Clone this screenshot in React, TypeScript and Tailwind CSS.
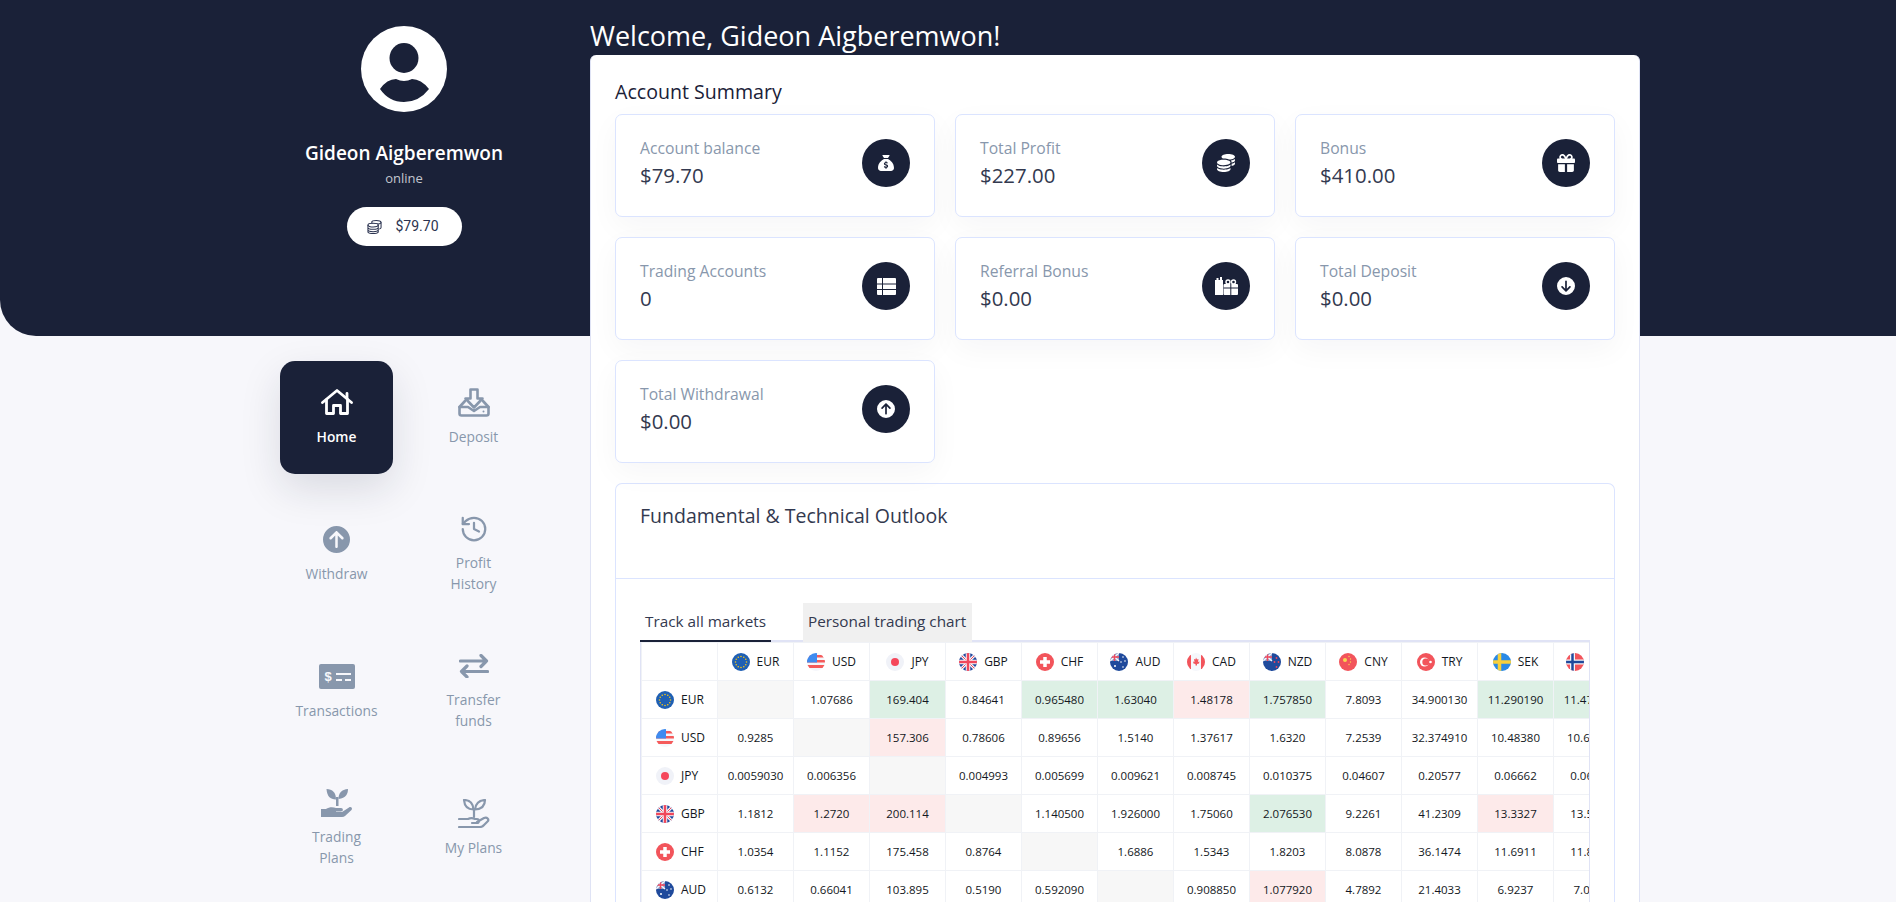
import React from "react";
import { History } from "lucide-react";
import {
  FaCircleArrowDown,
  FaCircleArrowUp,
  FaCoins,
  FaGift,
  FaSackDollar,
} from "react-icons/fa6";

const sans = "font-['Open_Sans','Noto_Sans',sans-serif]";

const HomeIcon = () => (
  <svg viewBox="0 0 32 26" className="h-[26px] w-[32px]" fill="none" stroke="currentColor" strokeWidth="2.800" strokeLinejoin="round" strokeLinecap="round">
    <path d="M1.500 13.500 16 1.500 30.500 13.500" />
    <path d="M26 9.500V4.500" />
    <path d="M5.500 11v13.500h7V16.500h7v8h7V11" />
  </svg>
);

const DepositIcon = () => (
  <svg viewBox="0 0 32 29" className="h-[29px] w-[32px]" fill="none" stroke="currentColor" strokeWidth="2.600" strokeLinejoin="round" strokeLinecap="round">
    <path d="M12.500 1.500h7v9h5L16 19.500 7.500 10.500h5z" />
    <path d="M7 13 1.500 19v6.500a2 2 0 0 0 2 2h25a2 2 0 0 0 2-2V19L25 13" />
    <path d="M1.500 19h8.500l6 4 6-4h8.500" />
    <circle cx="25.500" cy="23.500" r="1" fill="currentColor" stroke="none" />
  </svg>
);

const TransactionsIcon = () => (
  <svg viewBox="0 0 36 25" className="h-[25px] w-[36px]">
    <rect width="36" height="25" rx="2" fill="currentColor" />
    <text x="5.500" y="17" fontSize="13" fontWeight="700" fill="#f7f7fb" fontFamily="Liberation Sans, sans-serif">$</text>
    <path d="M17 10h15M17 16h6M26 16h6" stroke="#f7f7fb" strokeWidth="2" />
  </svg>
);

const TransferIcon = () => (
  <svg viewBox="0 0 30 24" className="h-[24px] w-[30px]" fill="none" stroke="currentColor" strokeWidth="3.200" strokeLinecap="round" strokeLinejoin="round">
    <path d="M1.500 7h26M22 1.500 27.500 7 22 12.500" />
    <path d="M28.500 17.500h-26M8 12 2.500 17.500 8 23" />
  </svg>
);

const TradingPlansIcon = () => (
  <svg viewBox="0 0 32 29" className="h-[29px] w-[32px]" fill="currentColor">
    <path d="M5.500 1c6 0 9.500 3.500 9.500 10.500C9 11.500 6 8 5.500 1z" />
    <path d="M27 1c0 5-2 9-9.500 10 0-6 3-9.500 9.500-10z" />
    <rect x="15" y="9" width="2.500" height="9" />
    <path d="M0 21h5c3-2 7-2 10-1h5c2.500 0 2.500 3.500 0 3.500h-5v.5h6l7-4.500c2-1.300 4 1 2.500 2.500L24 28q-1 1-3 1H0z" />
  </svg>
);

const MyPlansIcon = () => (
  <svg viewBox="0 0 32 29" className="h-[29px] w-[32px]" fill="none" stroke="currentColor" strokeWidth="2.200" strokeLinecap="round" strokeLinejoin="round">
    <path d="M6 1c6 0 9 3.500 9.500 9.500C9.500 10.500 6.500 7 6 1z" />
    <path d="M27 1c0 5-3 9-10 9.500C17.500 5 20.500 1.500 27 1z" />
    <path d="M16 10v8" />
    <path d="M1 20h9c2-1 5-1 7 0h2c2.500 0 2.500 4 0 4h-5" />
    <path d="M19 23l7-4c3-1.500 5.500 1.500 3.500 3.500L26 26q-1.500 2-4 2H1" />
  </svg>
);

const TableIcon = () => (
  <svg viewBox="0 0 19 17" className="h-[17px] w-[19px]">
    <rect width="19" height="17" rx="1" fill="#fff" />
    <path d="M5.500 0v17M0 6h19M0 11.500h19" stroke="#1a2138" strokeWidth="1" />
  </svg>
);

const GiftsIcon = () => (
  <svg viewBox="0 0 23 18" className="h-[18px] w-[23px]" fill="#fff">
    <path d="M0 3h1.500V1h2v2H5V0h2v3h1v15H0z" />
    <rect x="8.500" y="7" width="14.500" height="11" rx="1" />
    <circle cx="13" cy="5" r="2" fill="none" stroke="#fff" strokeWidth="1.400" />
    <circle cx="18.500" cy="5" r="2" fill="none" stroke="#fff" strokeWidth="1.400" />
    <path d="M15.800 7v11M8.500 11h14.500" stroke="#1a2138" strokeWidth="1" />
  </svg>
);

const navItems: { label: string[]; icon: React.ReactNode; active?: boolean }[] = [
  { label: ["Home"], icon: <HomeIcon />, active: true },
  { label: ["Deposit"], icon: <DepositIcon /> },
  { label: ["Withdraw"], icon: <FaCircleArrowUp className="h-[27px] w-[27px]" /> },
  { label: ["Profit", "History"], icon: <History className="h-[30px] w-[30px]" strokeWidth={1.800} /> },
  { label: ["Transactions"], icon: <TransactionsIcon /> },
  { label: ["Transfer", "funds"], icon: <TransferIcon /> },
  { label: ["Trading", "Plans"], icon: <TradingPlansIcon /> },
  { label: ["My Plans"], icon: <MyPlansIcon /> },
];

const stats = [
  { label: "Account balance", value: "$79.70", icon: <FaSackDollar className="h-[16px] w-[16px]" /> },
  { label: "Total Profit", value: "$227.00", icon: <FaCoins className="h-[18px] w-[18px]" /> },
  { label: "Bonus", value: "$410.00", icon: <FaGift className="h-[18px] w-[18px]" /> },
  { label: "Trading Accounts", value: "0", icon: <TableIcon /> },
  { label: "Referral Bonus", value: "$0.00", icon: <GiftsIcon /> },
  { label: "Total Deposit", value: "$0.00", icon: <FaCircleArrowDown className="h-[18px] w-[18px]" /> },
  { label: "Total Withdrawal", value: "$0.00", icon: <FaCircleArrowUp className="h-[18px] w-[18px]" /> },
];

const Flag = ({ code }: { code: string }) => {
  const inner: Record<string, React.ReactNode> = {
    EUR: (
      <>
        <rect width="18" height="18" fill="#1e5fb4" />
        {[0, 30, 60, 90, 120, 150, 180, 210, 240, 270, 300, 330].map((a) => (
          <circle key={a} cx={9 + 5.500 * Math.cos((a * Math.PI) / 180)} cy={9 + 5.500 * Math.sin((a * Math.PI) / 180)} r="0.800" fill="#f5c518" />
        ))}
      </>
    ),
    USD: (
      <>
        <rect width="18" height="18" fill="#f5f7fb" />
        <rect y="2" width="18" height="2.500" fill="#f55b5b" />
        <rect y="7" width="18" height="2.500" fill="#f55b5b" />
        <rect y="12" width="18" height="3" fill="#f55b5b" />
        <rect width="10" height="9.500" fill="#3e8bf0" />
      </>
    ),
    JPY: (
      <>
        <rect width="18" height="18" fill="#f0f2f8" />
        <circle cx="9" cy="9" r="4" fill="#f5475b" />
      </>
    ),
    GBP: (
      <>
        <rect width="18" height="18" fill="#24489c" />
        <path d="M0 0 18 18M18 0 0 18" stroke="#f5f7fb" strokeWidth="3" />
        <path d="M0 0 18 18M18 0 0 18" stroke="#f0475b" strokeWidth="1" />
        <path d="M9 0v18M0 9h18" stroke="#f5f7fb" strokeWidth="4.500" />
        <path d="M9 0v18M0 9h18" stroke="#f0475b" strokeWidth="2.500" />
      </>
    ),
    CHF: (
      <>
        <rect width="18" height="18" fill="#f2545b" />
        <path d="M9 4v10M4 9h10" stroke="#fff" strokeWidth="3.500" />
      </>
    ),
    AUD: (
      <>
        <rect width="18" height="18" fill="#1f4a9c" />
        <rect width="9" height="8" fill="#f5f7fb" opacity="0.500" />
        <path d="M0 0 9 8M9 0 0 8" stroke="#f5f7fb" strokeWidth="1.400" />
        <path d="M4.500 0v8M0 4h9" stroke="#f0475b" strokeWidth="1.400" />
        <circle cx="5" cy="13" r="1" fill="#fff" />
        <circle cx="13" cy="4" r="0.800" fill="#fff" />
        <circle cx="15" cy="8" r="0.800" fill="#fff" />
        <circle cx="11" cy="9" r="0.800" fill="#fff" />
        <circle cx="13" cy="14" r="0.800" fill="#fff" />
      </>
    ),
    CAD: (
      <>
        <rect width="18" height="18" fill="#f5f7fb" />
        <rect width="4" height="18" fill="#f2545b" />
        <rect x="14" width="4" height="18" fill="#f2545b" />
        <path d="M9 4.500 10 6.500l1.500-.5-.5 3 1.500-.5-.5 2-2 .5v1.500H8.500V11l-2-.5-.5-2 1.500.5-.5-3 1.500.5z" fill="#f2545b" />
      </>
    ),
    NZD: (
      <>
        <rect width="18" height="18" fill="#1f4a9c" />
        <rect width="9" height="8" fill="#f5f7fb" opacity="0.500" />
        <path d="M0 0 9 8M9 0 0 8" stroke="#f5f7fb" strokeWidth="1.400" />
        <path d="M4.500 0v8M0 4h9" stroke="#f0475b" strokeWidth="1.400" />
        <circle cx="13.500" cy="5" r="0.900" fill="#f0475b" />
        <circle cx="15.500" cy="9" r="0.900" fill="#f0475b" />
        <circle cx="11.500" cy="9" r="0.900" fill="#f0475b" />
        <circle cx="13.500" cy="14" r="0.900" fill="#f0475b" />
      </>
    ),
    CNY: (
      <>
        <rect width="18" height="18" fill="#f2545b" />
        <circle cx="6" cy="7" r="2" fill="#f8d64e" />
        <circle cx="10" cy="3.500" r="0.700" fill="#f8d64e" />
        <circle cx="11.500" cy="6" r="0.700" fill="#f8d64e" />
        <circle cx="11.500" cy="9" r="0.700" fill="#f8d64e" />
        <circle cx="10" cy="11.500" r="0.700" fill="#f8d64e" />
      </>
    ),
    TRY: (
      <>
        <rect width="18" height="18" fill="#f2545b" />
        <circle cx="7.500" cy="9" r="4.500" fill="#fff" />
        <circle cx="8.800" cy="9" r="3.500" fill="#f2545b" />
        <circle cx="13.500" cy="9" r="1.300" fill="#fff" />
      </>
    ),
    SEK: (
      <>
        <rect width="18" height="18" fill="#2a8ae6" />
        <path d="M6.500 0v18M0 9h18" stroke="#f8d03c" strokeWidth="3.500" />
      </>
    ),
    NOK: (
      <>
        <rect width="18" height="18" fill="#f2545b" />
        <path d="M6.500 0v18M0 9h18" stroke="#f5f7fb" strokeWidth="5" />
        <path d="M6.500 0v18M0 9h18" stroke="#1f4a9c" strokeWidth="2.500" />
      </>
    ),
  };
  return (
    <svg viewBox="0 0 18 18" className="h-[18px] w-[18px] shrink-0 rounded-full">
      {inner[code]}
    </svg>
  );
};

const currencies = ["EUR", "USD", "JPY", "GBP", "CHF", "AUD", "CAD", "NZD", "CNY", "TRY", "SEK", "NOK"];

// g: / r: prefixes mark the green and red heat cells, an empty string is the grey diagonal
const rows: Record<string, string[]> = {
  EUR: ["", "1.07686", "g:169.404", "0.84641", "g:0.965480", "g:1.63040", "r:1.48178", "g:1.757850", "7.8093", "34.900130", "g:11.290190", "g:11.474100"],
  USD: ["0.9285", "", "r:157.306", "0.78606", "0.89656", "1.5140", "1.37617", "1.6320", "7.2539", "32.374910", "10.48380", "10.65010"],
  JPY: ["0.0059030", "0.006356", "", "0.004993", "0.005699", "0.009621", "0.008745", "0.010375", "0.04607", "0.20577", "0.06662", "0.06773"],
  GBP: ["1.1812", "r:1.2720", "r:200.114", "", "1.140500", "1.926000", "1.75060", "g:2.076530", "9.2261", "41.2309", "r:13.3327", "13.5514"],
  CHF: ["1.0354", "1.1152", "175.458", "0.8764", "", "1.6886", "1.5343", "1.8203", "8.0878", "36.1474", "11.6911", "11.8825"],
  AUD: ["0.6132", "0.66041", "103.895", "0.5190", "0.592090", "", "0.908850", "r:1.077920", "4.7892", "21.4033", "6.9237", "7.0369"],
};

const Cell = ({ raw }: { raw: string }) => {
  const value = raw.replace(/^[gr]:/, "");
  let bg = "bg-white";
  if (raw === "") bg = "bg-[#f7f7f7]";
  else if (raw.startsWith("g:")) bg = "bg-[#ddf0e5]";
  else if (raw.startsWith("r:")) bg = "bg-[#fdeaea]";
  return <td className={`h-[38px] border border-[#f0f2f6] p-0 text-center ${bg}`}>{value}</td>;
};

export default function App() {
  return (
    <div className={`relative h-screen overflow-hidden bg-[#f7f7fb] ${sans}`}>
      <div className="absolute inset-x-0 top-0 h-[336px] rounded-bl-[36px] bg-[#1a2138]" />

      <div className="relative flex gap-[60px] pl-[280px]">
        <aside className="w-[250px] shrink-0">
          <div className="flex h-[361px] flex-col items-center pt-[26px] pr-[2px]">
            <svg viewBox="0 0 86 86" className="h-[86px] w-[86px]">
              <circle cx="43" cy="43" r="43" fill="#fff" />
              <ellipse cx="43" cy="32" rx="14.500" ry="15" fill="#1a2138" />
              <path d="M19 63Q26 53 35 53 43 57 51 53 60 53 68 63 58 76 43 76 28 76 19 63Z" fill="#1a2138" />
            </svg>
            <div className="mt-[29px] text-[19px] leading-[24px] font-semibold text-white">Gideon Aigberemwon</div>
            <div className="mt-[3px] text-[13px] leading-[20px] text-[#c3c6cf]">online</div>
            <div className="mt-[19px] flex h-[39px] w-[115px] items-center gap-[14px] rounded-full bg-white pl-[20px] font-['Roboto',sans-serif] text-[14px] text-[#2b3350]">
              <svg viewBox="0 0 16 16" className="h-[15px] w-[15px]" fill="none" stroke="currentColor" strokeWidth="1.100">
                <ellipse cx="10" cy="3.500" rx="5" ry="2" />
                <path d="M15 3.500v5.500c0 1-1 1.500-2 1.800" />
                <ellipse cx="6.500" cy="6.500" rx="5.500" ry="2" fill="#fff" />
                <path d="M1 6.500v7c0 1 2.500 2 5.500 2s5.500-1 5.500-2v-7M1 9c0 1 2.500 2 5.500 2S12 10 12 9M1 11.500c0 1 2.500 2 5.500 2s5.500-1 5.500-2" />
              </svg>
              $79.70
            </div>
          </div>

          <nav className="grid grid-cols-[113px_113px] gap-6">
            {navItems.map((item) => (
              <div
                key={item.label[0]}
                className={`flex h-[113px] flex-col items-center justify-center rounded-[15px] text-center text-[13.800px] leading-[21px] ${
                  item.active
                    ? "bg-[#1a2138] font-semibold text-white shadow-[0_15px_40px_rgba(26,33,56,0.13)]"
                    : "text-[#8897ac]"
                }`}
              >
                <div className="flex h-[27px] items-center justify-center">{item.icon}</div>
                <div className="mt-[10px]">
                  {item.label.map((line) => (
                    <div key={line}>{line}</div>
                  ))}
                </div>
              </div>
            ))}
          </nav>
        </aside>

        <main className="w-[1050px] shrink-0">
          <h1 className="h-[55px] pt-[19px] text-[27px] leading-[34px] text-white">Welcome, Gideon Aigberemwon!</h1>

          <div className="rounded-t-[6px] border-x border-[#dfe3f5] bg-white px-6 pt-[23px]">
            <h2 className="mb-[8px] text-[19.600px] leading-[28px] text-[#1a2138]">Account Summary</h2>

            <div className="grid grid-cols-3 gap-5">
              {stats.map((stat) => (
                <div
                  key={stat.label}
                  className="flex h-[103px] items-center justify-between rounded-[7px] border border-[#dbe4ff] bg-white px-6 pb-[5px] shadow-[0_10px_30px_rgba(26,33,56,0.04)]"
                >
                  <div>
                    <div className="-mt-[1px] text-[15.700px] leading-[22px] text-[#8897ac]">{stat.label}</div>
                    <div className="mt-[3px] text-[20.400px] leading-[27px] text-[#33394f]">{stat.value}</div>
                  </div>
                  <div className="flex h-12 w-12 items-center justify-center rounded-full bg-[#1a2138] text-white">
                    {stat.icon}
                  </div>
                </div>
              ))}
            </div>

            <div className="mt-5 rounded-t-[7px] border-x border-t border-[#dbe4ff] bg-white">
              <div className="h-[95px] border-b border-[#dbe4ff] px-6 pt-[18px] text-[19.500px] leading-[28px] text-[#33394f]">
                Fundamental &amp; Technical Outlook
              </div>

              <div className="px-6 pt-6">
                <div className="flex h-[39px] gap-8 border-b-2 border-[#e0e3f5] text-[15.300px] text-[#33394f]">
                  <div className="h-[39px] w-[131px] border-b-2 border-[#1a2138] px-[5px] leading-[36px]">Track all markets</div>
                  <div className="h-[39px] w-[169px] bg-[#f0f0f0] px-[5px] leading-[36px]">Personal trading chart</div>
                </div>

                <div className="w-[950px] overflow-hidden border-x border-[#e0e3f5] font-['Open_Sans',sans-serif] text-[11.500px] text-[#131722]">
                  <table className="w-[988px] table-fixed border-collapse">
                    <thead>
                      <tr>
                        <th className="h-[38px] w-[76px] border border-[#f0f2f6] p-0" />
                        {currencies.map((code) => (
                          <th key={code} className="h-[38px] w-[76px] border border-[#f0f2f6] p-0 text-[12px] font-medium">
                            <div className="flex items-center justify-center gap-[7px]">
                              <Flag code={code} />
                              {code}
                            </div>
                          </th>
                        ))}
                      </tr>
                    </thead>
                    <tbody>
                      {Object.keys(rows).map((code) => (
                        <tr key={code}>
                          <td className="h-[38px] border border-[#f0f2f6] p-0 text-[12px] font-medium">
                            <div className="flex items-center gap-[7px] pl-[14px]">
                              <Flag code={code} />
                              {code}
                            </div>
                          </td>
                          {rows[code].map((raw, i) => (
                            <Cell key={i} raw={raw} />
                          ))}
                        </tr>
                      ))}
                    </tbody>
                  </table>
                </div>
              </div>
            </div>
          </div>
        </main>
      </div>
    </div>
  );
}
